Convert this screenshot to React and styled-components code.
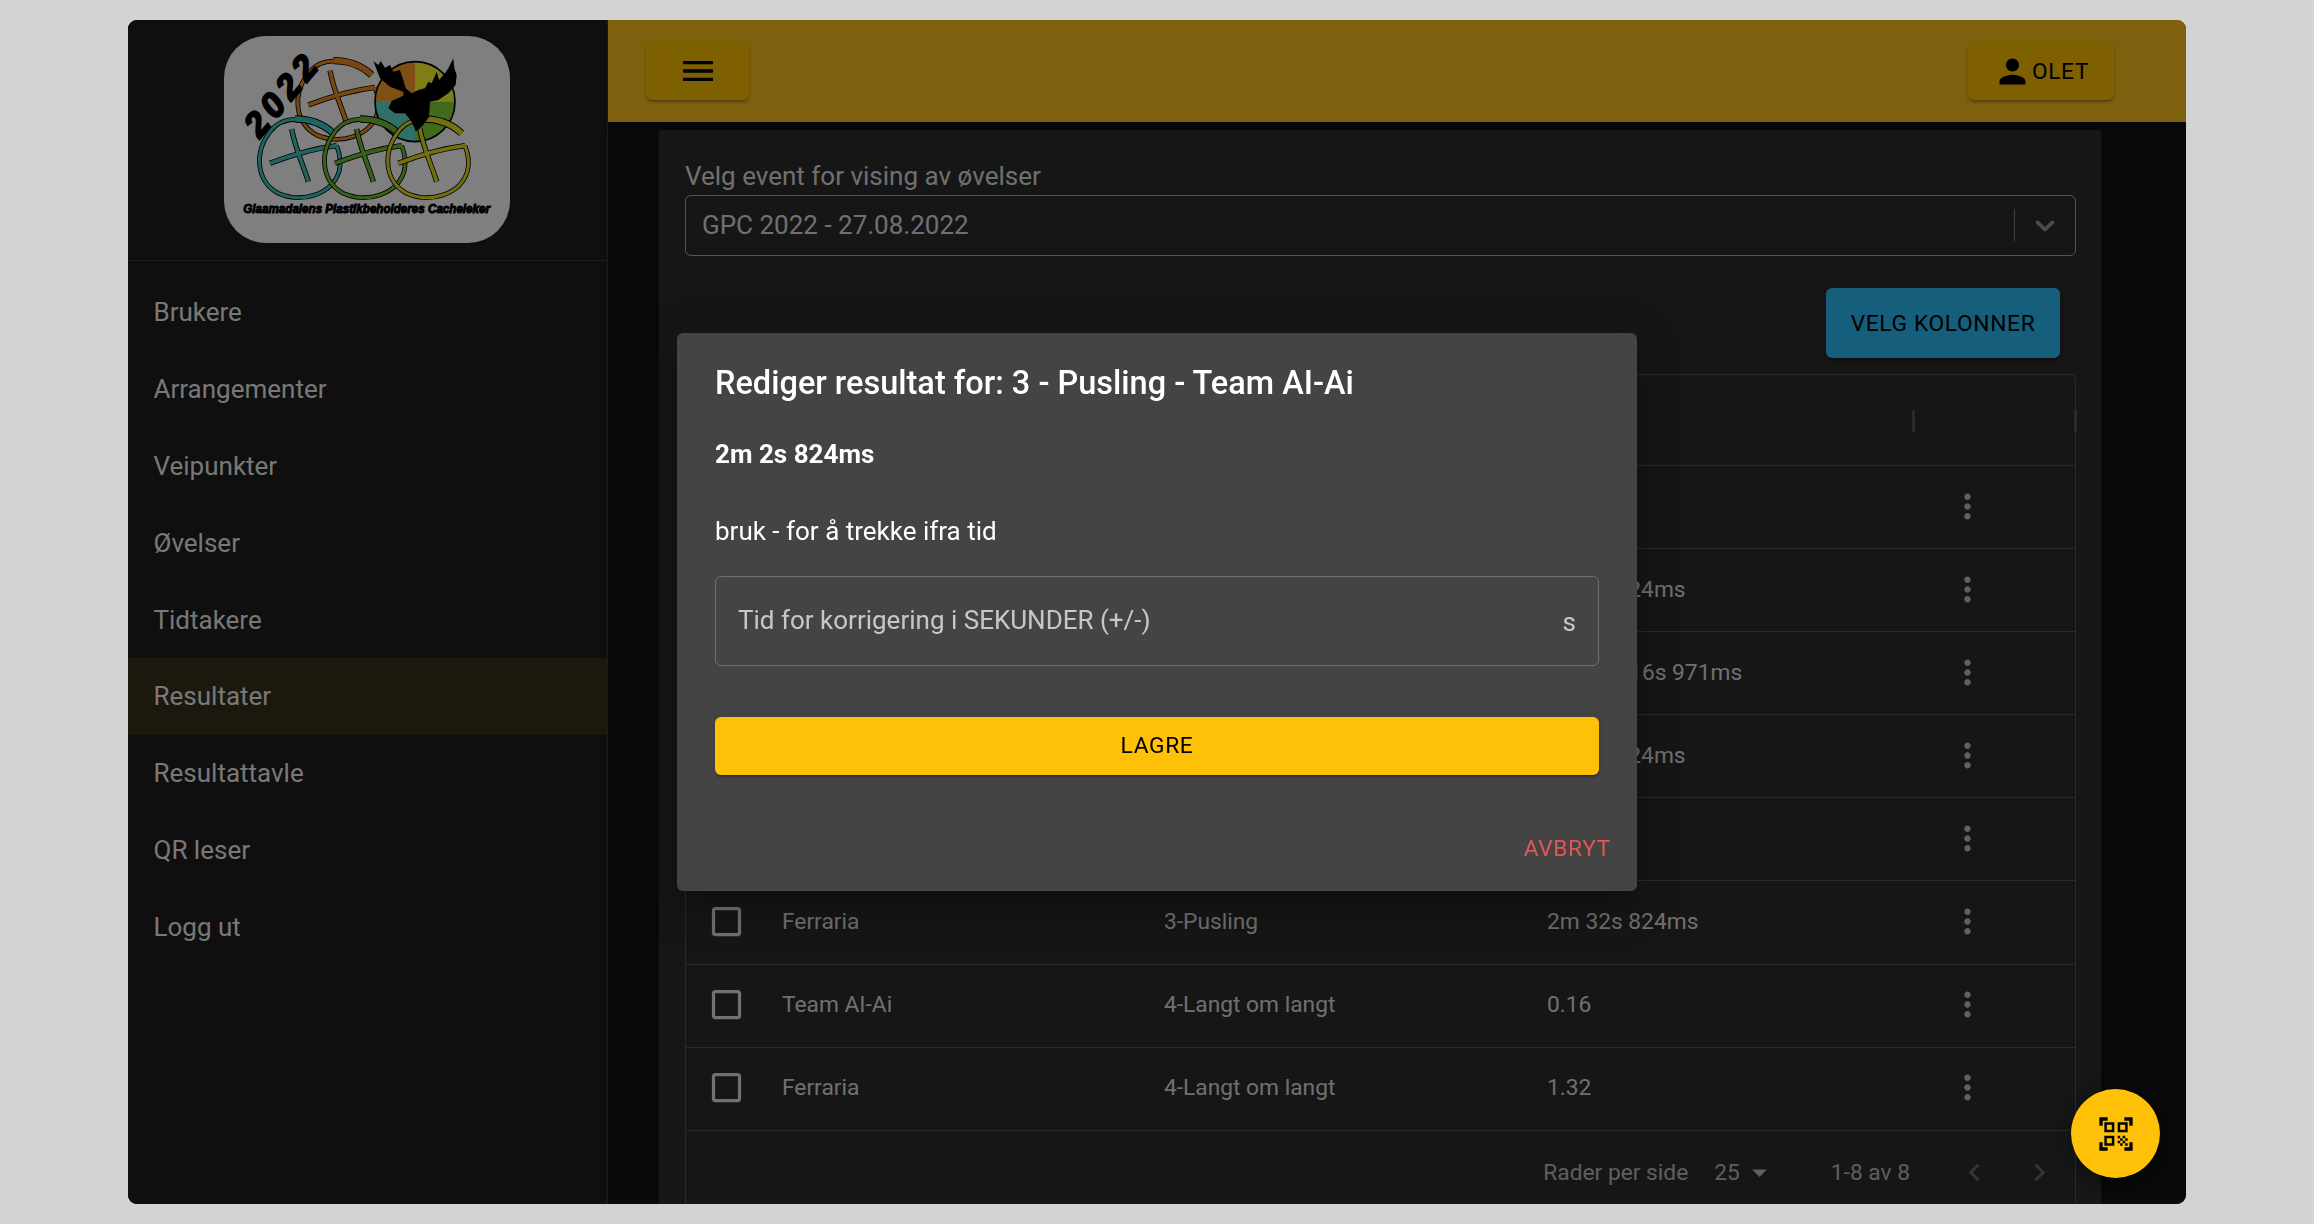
import React from 'react';
import styled, { createGlobalStyle } from 'styled-components';

const cl = {
  yellow: '#fcc31c',
  yellowBtn: '#ffc107',
  line: '#555',
  text: 'rgba(255,255,255,0.87)',
  muted: 'rgba(255,255,255,0.7)',
};

const GlobalStyle = createGlobalStyle`
  html, body { margin: 0; height: 100%; background: #d3d3d3; }
  body { font-family: Roboto, "Liberation Sans", sans-serif; }
  * { box-sizing: border-box; }
`;

const paths = {
  menu: 'M3 18h18v-2H3v2zm0-5h18v-2H3v2zm0-7v2h18V6H3z',
  person:
    'M12 12c2.21 0 4-1.79 4-4s-1.79-4-4-4-4 1.79-4 4 1.79 4 4 4zm0 2c-2.67 0-8 1.34-8 4v2h16v-2c0-2.66-5.33-4-8-4z',
  more:
    'M12 8c1.1 0 2-.9 2-2s-.9-2-2-2-2 .9-2 2 .9 2 2 2zm0 2c-1.1 0-2 .9-2 2s.9 2 2 2 2-.9 2-2-.9-2-2-2zm0 6c-1.1 0-2 .9-2 2s.9 2 2 2 2-.9 2-2-.9-2-2-2z',
  box: 'M19 5v14H5V5h14m0-2H5c-1.1 0-2 .9-2 2v14c0 1.1.9 2 2 2h14c1.1 0 2-.9 2-2V5c0-1.1-.9-2-2-2z',
  left: 'M15.41 7.41 14 6l-6 6 6 6 1.41-1.41L10.83 12z',
  right: 'M10 6 8.59 7.41 13.17 12l-4.58 4.59L10 18l6-6z',
  drop: 'M7 10l5 5 5-5z',
  qr: 'M9.5 6.5v3h-3v-3h3M11 5H5v6h6V5zm-1.5 9.5v3h-3v-3h3M11 13H5v6h6v-6zm6.5-6.5v3h-3v-3h3M19 5h-6v6h6V5zm-6 8h1.5v1.5H13V13zm1.5 1.5H16V16h-1.5v-1.5zM16 13h1.5v1.5H16V13zm-3 3h1.5v1.5H13V16zm1.5 1.5H16V19h-1.5v-1.5zM16 16h1.5v1.5H16V16zm1.5-1.5H19V16h-1.5v-1.5zm0 3H19V19h-1.5v-1.5zM22 7h-2V4h-3V2h5v5zm0 15v-5h-2v3h-3v2h5zM2 22h5v-2H4v-3H2v5zM2 2v5h2V4h3V2H2z',
};

const Icon = ({ d, size = 39, color = 'currentColor' }) => (
  <svg width={size} height={size} viewBox="0 0 24 24" fill={color} style={{ flex: 'none', display: 'block' }}>
    <path d={d} />
  </svg>
);

const ring =
  'M355 325 C300 275 205 265 165 320 C115 385 125 470 190 505 C260 535 350 510 372 440 C380 410 372 380 365 362';
const bar = 'M365 362 C300 370 230 390 165 415';
const upright = 'M230 312 C240 370 265 420 280 470';
const topArc = 'M355 325 C320 292 280 282 240 282';

const Cache = ({ color, dx, dy }) => (
  <g transform={`translate(${dx} ${dy})`} fill="none" strokeLinecap="butt">
    <path d={ring} stroke="#000" strokeWidth="14" />
    <path d={bar} stroke="#000" strokeWidth="16" />
    <path d={upright} stroke="#000" strokeWidth="16" />
    <path d={topArc} stroke="#000" strokeWidth="22" />
    <path d={ring} stroke={color} strokeWidth="9" />
    <path d={topArc} stroke={color} strokeWidth="17" />
    <path d={bar} stroke={color} strokeWidth="11" />
    <path d={upright} stroke={color} strokeWidth="11" />
  </g>
);

const LogoArt = () => (
  <svg width="286" height="207" viewBox="27 33 858 621">
    <Cache color="#f09020" dx={115} dy={-175} />
    <g stroke="none">
      <path d="M600 230 V110 A120 120 0 0 0 480 230 Z" fill="#ffa028" />
      <path d="M600 230 V110 A120 120 0 0 1 720 230 Z" fill="#fffc2c" />
      <path d="M600 230 H480 A120 120 0 0 0 600 350 Z" fill="#62e0d2" />
      <path d="M600 230 H720 A120 120 0 0 1 600 350 Z" fill="#84d43a" />
    </g>
    <circle cx="600" cy="230" r="120" fill="none" stroke="#000" strokeWidth="5" />
    <Cache color="#40c8c0" dx={0} dy={0} />
    <Cache color="#70c030" dx={195} dy={0} />
    <Cache color="#e8e020" dx={385} dy={0} />
    <path
      d="M475 108 L490 120 L497 108 L510 128 L525 120 L535 140 L555 135 L565 165 L572 190 L590 205 L610 195 L630 190 L640 170 L650 175 L665 140 L672 165 L690 145 L700 130 L715 100 L718 130 L725 150 L722 180 L700 205 L670 225 L645 230 L642 275 L625 300 L603 320 L590 290 L570 265 L540 265 L520 250 L530 228 L565 212 L565 200 L525 185 L495 160 Z"
      fill="#000"
    />
    <LogoYear x="134" y="342" transform="rotate(-50 134 342)">
      2022
    </LogoYear>
    <LogoSlogan x="85" y="564" textLength="740" lengthAdjust="spacingAndGlyphs">
      Glaamadalens Plastikbeholderes Cacheleker
    </LogoSlogan>
  </svg>
);

const LogoYear = styled.text`
  font-family: 'Liberation Sans', sans-serif;
  font-weight: 700;
  font-style: italic;
  font-size: 104px;
  letter-spacing: 16px;
  stroke: #000;
  stroke-width: 6px;
`;

const LogoSlogan = styled.text`
  font-family: 'Liberation Sans', sans-serif;
  font-weight: 700;
  font-style: italic;
  font-size: 36px;
  stroke: #000;
  stroke-width: 3px;
`;

const menu = ['Brukere', 'Arrangementer', 'Veipunkter', 'Øvelser', 'Tidtakere', 'Resultater', 'Resultattavle', 'QR leser', 'Logg ut'];

const rows = [
  ['Team AI-Ai', '2-Pusling', '0.16'],
  ['Ferraria', '1-Pusling', '2m 2s 824ms'],
  ['Team AI-Ai', '2-Pusling', '1h 12m 16s 971ms'],
  ['Team AI-Ai', '3-Pusling', '2m 2s 824ms'],
  ['Ferraria', '2-Pusling', '1.32'],
  ['Ferraria', '3-Pusling', '2m 32s 824ms'],
  ['Team AI-Ai', '4-Langt om langt', '0.16'],
  ['Ferraria', '4-Langt om langt', '1.32'],
];

const App = () => (
  <Page>
    <GlobalStyle />
    <Frame>
      <Sidebar>
        <LogoBar>
          <Logo>
            <LogoArt />
          </Logo>
        </LogoBar>
        <NavList>
          {menu.map((item) => (
            <NavItem key={item} $active={item === 'Resultater'}>
              {item}
            </NavItem>
          ))}
        </NavList>
      </Sidebar>
      <Main>
        <Header>
          <HeaderButton $w={103}>
            <Icon d={paths.menu} size={40} />
          </HeaderButton>
          <HeaderButton $w={146}>
            <Icon d={paths.person} />
            <UserName>OLET</UserName>
          </HeaderButton>
        </Header>
        <Paper>
          <FieldLabel>Velg event for vising av øvelser</FieldLabel>
          <Select>
            <SelectValue>GPC 2022 - 27.08.2022</SelectValue>
            <SelectDivider />
            <svg width="32" height="32" viewBox="0 0 20 20" fill="#999">
              <path d="M4.516 7.548c0.436-0.446 1.043-0.481 1.576 0l3.908 3.747 3.908-3.747c0.533-0.481 1.141-0.446 1.574 0 0.436 0.445 0.408 1.197 0 1.615-0.406 0.418-4.695 4.502-4.695 4.502-0.217 0.223-0.502 0.335-0.787 0.335s-0.57-0.112-0.789-0.335c0 0-4.287-4.084-4.695-4.502s-0.436-1.17 0-1.615z" />
            </svg>
          </Select>
          <Toolbar>
            <ColumnsButton>VELG KOLONNER</ColumnsButton>
          </Toolbar>
          <Table>
            <HeadRow>
              <Cell />
              <HeadCell>Lag</HeadCell>
              <HeadCell>Øvelse</HeadCell>
              <HeadCell $sep>Resultat</HeadCell>
              <HeadCell $sep />
            </HeadRow>
            {rows.map(([team, task, time], i) => (
              <Row key={i}>
                <Cell $center>
                  <Icon d={paths.box} />
                </Cell>
                <Cell>{team}</Cell>
                <Cell>{task}</Cell>
                <Cell>{time}</Cell>
                <ActionCell>
                  <Icon d={paths.more} />
                </ActionCell>
              </Row>
            ))}
            <Pagination>
              <PageLabel>Rader per side</PageLabel>
              <PageSize>
                25
                <Icon d={paths.drop} size={35} />
              </PageSize>
              <PageCount>1-8 av 8</PageCount>
              <PageArrows>
                <Icon d={paths.left} size={35} />
                <Icon d={paths.right} size={35} />
              </PageArrows>
            </Pagination>
          </Table>
        </Paper>
      </Main>
      <Backdrop />
      <Fab>
        <Icon d={paths.qr} size={40} />
      </Fab>
    </Frame>
    <DialogWrap>
      <Dialog>
        <DialogTitle>Rediger resultat for: 3 - Pusling - Team AI-Ai</DialogTitle>
        <DialogTime>2m 2s 824ms</DialogTime>
        <DialogHint>bruk - for å trekke ifra tid</DialogHint>
        <InputBox>
          <span>Tid for korrigering i SEKUNDER (+/-)</span>
          <InputUnit>s</InputUnit>
        </InputBox>
        <SaveButton>LAGRE</SaveButton>
        <DialogActions>
          <CancelButton>AVBRYT</CancelButton>
        </DialogActions>
      </Dialog>
    </DialogWrap>
  </Page>
);

const Page = styled.div`
  height: 100vh;
  display: flex;
  align-items: center;
  justify-content: center;
`;

const Frame = styled.div`
  position: relative;
  width: 2058px;
  height: 1184px;
  display: flex;
  overflow: hidden;
  border-radius: 9px;
  background: #121212;
`;

const Sidebar = styled.aside`
  width: 480px;
  flex: none;
  background: #1e1e1e;
  border-right: 1px solid rgba(255, 255, 255, 0.12);
`;

const LogoBar = styled.div`
  height: 241px;
  padding-top: 16px;
  display: flex;
  justify-content: center;
  border-bottom: 1px solid rgba(255, 255, 255, 0.12);
`;

const Logo = styled.div`
  width: 286px;
  height: 207px;
  margin-left: -1px;
  border-radius: 42px;
  background: #fff;
  overflow: hidden;
`;

const NavList = styled.nav`
  padding-top: 13px;
`;

const NavItem = styled.div`
  height: 76.8px;
  padding-left: 25.5px;
  display: flex;
  align-items: center;
  font-size: 26px;
  color: rgba(255, 255, 255, 0.95);
  background: ${(p) => (p.$active ? 'rgba(255, 193, 7, 0.12)' : 'transparent')};
`;

const Main = styled.main`
  flex: 1;
  min-width: 0;
  display: flex;
  flex-direction: column;
`;

const Header = styled.header`
  height: 102px;
  flex: none;
  padding: 0 72px 0 38px;
  display: flex;
  align-items: center;
  justify-content: space-between;
  background: ${cl.yellow};
  box-shadow: 0 3px 6px rgba(0, 0, 0, 0.3);
`;

const HeaderButton = styled.div`
  width: ${(p) => p.$w}px;
  height: 58px;
  display: flex;
  align-items: center;
  justify-content: center;
  border-radius: 6px;
  color: #000;
  background: #ffc000;
  box-shadow: 0 3px 3px -2px rgba(0, 0, 0, 0.3), 0 2px 4px rgba(0, 0, 0, 0.2);
`;

const UserName = styled.span`
  font-size: 22.75px;
  letter-spacing: 0.65px;
`;

const Paper = styled.section`
  flex: 1;
  margin: 8px 85px 0 51px;
  padding: 31px 25px 0 26px;
  background: #2c2c2c;
  overflow: hidden;
`;

const FieldLabel = styled.div`
  height: 34px;
  line-height: 30px;
  font-size: 26px;
  color: ${cl.text};
`;

const Select = styled.div`
  height: 61px;
  padding: 0 14px 1px 16px;
  display: flex;
  align-items: center;
  border: 1px solid rgba(255, 255, 255, 0.6);
  border-radius: 6px;
  color: ${cl.text};
`;

const SelectValue = styled.div`
  flex: 1;
  font-size: 26px;
`;

const SelectDivider = styled.div`
  width: 1px;
  height: 32px;
  margin-right: 14px;
  background: rgba(255, 255, 255, 0.4);
`;

const Toolbar = styled.div`
  margin-top: 32px;
  padding-right: 16px;
  display: flex;
  justify-content: flex-end;
`;

const ColumnsButton = styled.div`
  width: 234px;
  height: 70px;
  display: flex;
  align-items: center;
  justify-content: center;
  font-size: 22.75px;
  letter-spacing: 0.65px;
  border-radius: 6px;
  color: #000;
  background: #2abcf8;
  box-shadow: 0 3px 3px -2px rgba(0, 0, 0, 0.3), 0 2px 4px rgba(0, 0, 0, 0.2);
`;

const Table = styled.div`
  margin-top: 16px;
  border: 1px solid ${cl.line};
  border-bottom: 0;
  border-radius: 6px 6px 0 0;
  font-size: 22.75px;
  color: ${cl.text};
`;

const columns = '81px 382px 383px 381px 1fr';

const HeadRow = styled.div`
  height: 91px;
  display: grid;
  grid-template-columns: ${columns};
  border-bottom: 1px solid ${cl.line};
`;

const Row = styled.div`
  height: 83.1px;
  padding-bottom: 2px;
  display: grid;
  grid-template-columns: ${columns};
  align-items: center;
  border-bottom: 1px solid ${cl.line};
`;

const Cell = styled.div`
  padding-left: ${(p) => (p.$center ? '21px' : '15px')};
`;

const HeadCell = styled.div`
  position: relative;
  padding-left: 15px;
  line-height: 90px;
  font-weight: 500;
  &::after {
    content: '';
    display: ${(p) => (p.$sep ? 'block' : 'none')};
    position: absolute;
    right: -2px;
    top: 35px;
    width: 3px;
    height: 22px;
    background: ${cl.line};
  }
`;

const ActionCell = styled.div`
  padding-left: 35px;
  color: ${cl.muted};
`;

const Pagination = styled.div`
  height: 86px;
  padding-bottom: 3px;
  display: flex;
  align-items: center;
  justify-content: flex-end;
  color: ${cl.muted};
`;

const PageLabel = styled.span`
  margin-right: 26px;
`;

const PageSize = styled.span`
  display: flex;
  align-items: center;
  gap: 2px;
  margin-right: 54px;
`;

const PageCount = styled.span`
  margin-right: 47px;
`;

const PageArrows = styled.span`
  display: flex;
  gap: 30px;
  margin-right: 18px;
  color: rgba(255, 255, 255, 0.3);
`;

const Backdrop = styled.div`
  position: absolute;
  inset: 0;
  background: rgba(0, 0, 0, 0.5);
`;

const Fab = styled.div`
  position: absolute;
  right: 26px;
  bottom: 26px;
  width: 89px;
  height: 89px;
  display: flex;
  align-items: center;
  justify-content: center;
  border-radius: 50%;
  color: #000;
  background: ${cl.yellowBtn};
  box-shadow: 0 3px 5px -1px rgba(0, 0, 0, 0.2), 0 6px 10px rgba(0, 0, 0, 0.14), 0 1px 18px rgba(0, 0, 0, 0.12);
`;

const DialogWrap = styled.div`
  position: fixed;
  inset: 0;
  display: flex;
  align-items: center;
  justify-content: center;
`;

const Dialog = styled.div`
  width: 960px;
  height: 558px;
  padding: 28px 38px 0 38px;
  display: flex;
  flex-direction: column;
  border-radius: 6px;
  color: #fff;
  background: #444;
  box-shadow: 0 11px 15px -7px rgba(0, 0, 0, 0.2), 0 24px 38px 3px rgba(0, 0, 0, 0.14), 0 9px 46px 8px rgba(0, 0, 0, 0.12);
`;

const DialogTitle = styled.h2`
  margin: 0;
  line-height: 44px;
  font-size: 32.5px;
  font-weight: 500;
`;

const DialogTime = styled.div`
  margin-top: 33px;
  line-height: 32px;
  font-size: 26px;
  font-weight: 700;
`;

const DialogHint = styled.div`
  margin-top: 45px;
  line-height: 32px;
  font-size: 26px;
`;

const InputBox = styled.div`
  margin-top: 29px;
  height: 90px;
  padding: 0 22px 2px;
  display: flex;
  align-items: center;
  justify-content: space-between;
  border: 1px solid rgba(255, 255, 255, 0.23);
  border-radius: 6px;
  font-size: 26px;
  color: rgba(255, 255, 255, 0.7);
`;

const InputUnit = styled.span`
  margin-top: 3px;
`;

const SaveButton = styled.div`
  margin-top: 51px;
  height: 58px;
  padding-bottom: 1px;
  flex: none;
  display: flex;
  align-items: center;
  justify-content: center;
  border-radius: 6px;
  font-size: 22.75px;
  letter-spacing: 0.65px;
  color: #000;
  background: ${cl.yellowBtn};
  box-shadow: 0 3px 1px -2px rgba(0, 0, 0, 0.2), 0 2px 2px rgba(0, 0, 0, 0.14), 0 1px 5px rgba(0, 0, 0, 0.12);
`;

const DialogActions = styled.div`
  margin: 54px -12px 0 0;
  display: flex;
  justify-content: flex-end;
`;

const CancelButton = styled.div`
  line-height: 40px;
  font-size: 22.75px;
  letter-spacing: 0.65px;
  color: #e05757;
`;

export default App;
